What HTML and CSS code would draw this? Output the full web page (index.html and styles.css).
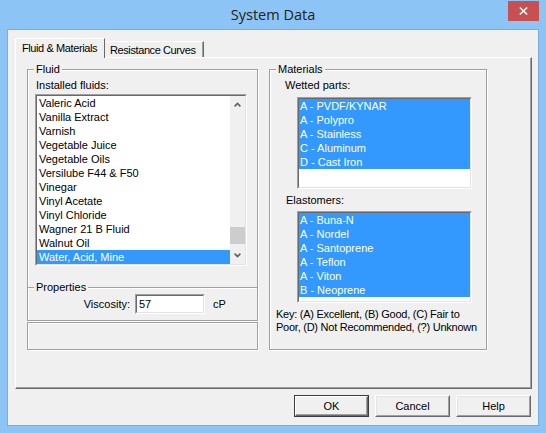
FILE: index.html
```html
<!DOCTYPE html>
<html>
<head>
<meta charset="utf-8">
<title>System Data</title>
<link rel="stylesheet" href="styles.css">
</head>
<body>
<div class="window">
  <div class="titlebar">
    <div></div>
    <div class="title">System Data</div>
    <div class="tb-right">
      <div class="close">
        <svg width="9" height="8" viewBox="0 0 9 8"><path d="M0.8 0.5 L8.2 7.5 M8.2 0.5 L0.8 7.5" fill="none" stroke="#fff" stroke-width="1.5"/></svg>
      </div>
    </div>
  </div>
  <div class="client">
    <div class="tabs">
      <div class="tab tab-active">Fluid &amp; Materials</div>
      <div class="tab tab-plain">Resistance Curves</div>
    </div>
    <div class="panel">
      <div class="col-left">
        <div class="group group-fluid">
          <div class="legend">Fluid</div>
          <div class="field-label">Installed fluids:</div>
          <div class="listbox lb-fluids">
            <div class="lb-inner">
              <div class="items">
                <div class="item">Valeric Acid</div>
                <div class="item">Vanilla Extract</div>
                <div class="item">Varnish</div>
                <div class="item">Vegetable Juice</div>
                <div class="item">Vegetable Oils</div>
                <div class="item">Versilube F44 &amp; F50</div>
                <div class="item">Vinegar</div>
                <div class="item">Vinyl Acetate</div>
                <div class="item">Vinyl Chloride</div>
                <div class="item">Wagner 21 B Fluid</div>
                <div class="item">Walnut Oil</div>
                <div class="item sel">Water, Acid, Mine</div>
              </div>
              <div class="scrollbar">
                <div class="sb-arrow">
                  <svg width="7" height="5" viewBox="0 0 7 5"><path d="M0.6 4.4 L3.5 1.4 L6.4 4.4" fill="none" stroke="#606060" stroke-width="1.6"/></svg>
                </div>
                <div class="sb-track"><div class="sb-thumb"></div></div>
                <div class="sb-arrow">
                  <svg width="7" height="5" viewBox="0 0 7 5"><path d="M0.6 0.6 L3.5 3.6 L6.4 0.6" fill="none" stroke="#606060" stroke-width="1.6"/></svg>
                </div>
              </div>
            </div>
          </div>
        </div>
        <div class="group group-props">
          <div class="legend">Properties</div>
          <div class="visc-row">
            <span class="visc-label">Viscosity:</span>
            <div class="textbox"><div class="tb-inner">57</div></div>
            <span class="unit">cP</span>
          </div>
        </div>
        <div class="group group-empty"></div>
      </div>
      <div class="group group-materials">
        <div class="legend">Materials</div>
        <div class="field-label mat-label">Wetted parts:</div>
        <div class="listbox lb-mat">
          <div class="lb-inner">
            <div class="items">
              <div class="item sel">A - PVDF/KYNAR</div>
              <div class="item sel">A - Polypro</div>
              <div class="item sel">A - Stainless</div>
              <div class="item sel">C - Aluminum</div>
              <div class="item sel">D - Cast Iron</div>
            </div>
          </div>
        </div>
        <div class="field-label elast-label">Elastomers:</div>
        <div class="listbox lb-mat lb-elast">
          <div class="lb-inner">
            <div class="items">
              <div class="item sel">A - Buna-N</div>
              <div class="item sel">A - Nordel</div>
              <div class="item sel">A - Santoprene</div>
              <div class="item sel">A - Teflon</div>
              <div class="item sel">A - Viton</div>
              <div class="item sel">B - Neoprene</div>
            </div>
          </div>
        </div>
        <div class="key">Key: (A) Excellent, (B) Good, (C) Fair to<br>Poor, (D) Not Recommended, (?) Unknown</div>
      </div>
    </div>
    <div class="buttons">
      <div class="btn btn-default"><div class="btn-face">OK</div></div>
      <div class="btn"><div class="btn-face">Cancel</div></div>
      <div class="btn"><div class="btn-face">Help</div></div>
    </div>
  </div>
</div>
</body>
</html>
```

FILE: styles.css
```css
* { box-sizing: border-box; }

html, body {
  margin: 0;
  padding: 0;
}

body {
  font-family: "Liberation Sans", Arial, sans-serif;
  font-size: 11px;
  line-height: 13px;
  color: #000;
  background: #8cc4f5;
}

.window {
  width: 546px;
  height: 433px;
  background: #8cc4f5;
  padding: 0 7px 7px 7px;
  display: flex;
  flex-direction: column;
}

.titlebar {
  height: 29px;
  display: grid;
  grid-template-columns: 1fr auto 1fr;
  align-items: start;
}

.title {
  font-family: "Open Sans", "Noto Sans", sans-serif;
  font-size: 14.5px;
  line-height: 20px;
  padding-top: 5px;
  color: #222;
  white-space: nowrap;
}

.tb-right {
  display: flex;
  justify-content: flex-end;
}

.close {
  width: 31px;
  height: 20px;
  margin-top: 1px;
  background: #c75050;
  display: flex;
  align-items: center;
  justify-content: center;
}

.client {
  flex: 1;
  background: #f0f0f0;
  border: 1px solid #78ace0;
  padding: 8px 7px 8px 7px;
  display: flex;
  flex-direction: column;
}

/* Tabs */
.tabs {
  display: flex;
  align-items: flex-end;
  height: 19px;
}

.tab {
  letter-spacing: -0.4px;
  white-space: nowrap;
  background: #f0f0f0;
}

.tab-active {
  width: 90px;
  height: 20px;
  margin-bottom: -1px;
  position: relative;
  z-index: 1;
  border-top: 1px solid #fff;
  border-left: 1px solid #fff;
  border-right: 1px solid #696969;
  padding: 3px 0 0 6px;
  line-height: 13px;
}

.tab-plain {
  width: 99px;
  height: 16px;
  border-top: 1px solid #fff;
  border-right: 1px solid #696969;
  box-shadow: inset -1px 0 0 #a0a0a0;
  padding: 2px 0 0 5px;
  line-height: 13px;
}

.panel {
  width: 517px;
  height: 332px;
  border-top: 1px solid #fff;
  border-left: 1px solid #fff;
  border-right: 1px solid #696969;
  border-bottom: 1px solid #696969;
  box-shadow: inset -1px -1px 0 #a0a0a0;
  padding: 11px 0 0 11px;
  display: flex;
  align-items: stretch;
  gap: 11px;
  height: 332px;
}

.panel > * { align-self: flex-start; }

/* Group boxes */
.group {
  border: 1px solid #a0a0a0;
  box-shadow: inset 1px 1px 0 #fff, 1px 1px 0 #fff;
}

.legend {
  display: table;
  margin: -7px 0 0 6px;
  padding: 0 2px;
  background: #f0f0f0;
  line-height: 13px;
}

.col-left {
  width: 231px;
  display: flex;
  flex-direction: column;
}

.group-fluid {
  border-bottom: none;
  padding-bottom: 21px;
}

.field-label {
  margin: 3px 0 0 8px;
  line-height: 13px;
}

/* Listboxes */
.listbox {
  border: 1px solid;
  border-color: #a0a0a0 #fff #fff #a0a0a0;
  background: #fff;
}

.lb-inner {
  height: 100%;
  border: 1px solid;
  border-color: #696969 #e3e3e3 #e3e3e3 #696969;
  display: flex;
}

.lb-fluids {
  width: 212px;
  height: 172px;
  margin: 2px 0 0 7px;
}

.items {
  flex: 1;
  min-width: 0;
}

.item {
  height: 14px;
  line-height: 14px;
  padding-left: 2px;
  white-space: nowrap;
}

.item.sel {
  background: #3399ff;
  color: #fff;
}

.scrollbar {
  width: 15px;
  background: #f0f0f0;
  display: flex;
  flex-direction: column;
}

.sb-arrow {
  height: 17px;
  display: flex;
  align-items: center;
  justify-content: center;
}

.sb-track {
  flex: 1;
  display: flex;
  flex-direction: column;
}

.sb-thumb {
  margin-top: auto;
  margin-bottom: 3px;
  height: 17px;
  background: #cdcdcd;
}

/* Properties */
.group-props {
  height: 34px;
}

.visc-row {
  display: flex;
  align-items: center;
  height: 20px;
}

.visc-label {
  width: 102px;
  text-align: right;
}

.textbox {
  width: 70px;
  height: 20px;
  margin-left: 5px;
  border: 1px solid;
  border-color: #a0a0a0 #fff #fff #a0a0a0;
  background: #fff;
}

.tb-inner {
  height: 100%;
  border: 1px solid;
  border-color: #696969 #e3e3e3 #e3e3e3 #696969;
  padding-left: 2px;
  line-height: 16px;
}

.unit {
  margin-left: 8px;
}

.group-empty {
  height: 28px;
  margin-top: 1px;
}

/* Materials */
.group-materials {
  width: 218px;
  height: 281px;
}

.mat-label {
  margin-left: 15px;
}

.lb-mat {
  width: 175px;
  height: 92px;
  margin: 5px 0 0 27px;
}

.lb-mat .item {
  padding-left: 1px;
}

.elast-label {
  margin: 5px 0 0 16px;
}

.lb-elast {
  margin-top: 4px;
}

.key {
  margin: 5px 0 0 6px;
  white-space: nowrap;
  letter-spacing: -0.25px;
  line-height: 13px;
}

/* Buttons */
.buttons {
  display: flex;
  justify-content: flex-end;
  gap: 6px;
  margin-top: 6px;
  padding-right: 0;
}

.btn {
  width: 75px;
  height: 22px;
  border: 1px solid;
  border-color: #fff #696969 #696969 #fff;
}

.btn-face {
  height: 100%;
  border: 1px solid;
  border-color: #e3e3e3 #a0a0a0 #a0a0a0 #e3e3e3;
  display: flex;
  align-items: center;
  justify-content: center;
  line-height: 13px;
}

.btn-default {
  border: 1px solid #3c3c3c;
}

.btn-default .btn-face {
  border-color: #fff #696969 #696969 #fff;
  box-shadow: inset -1px -1px 0 #a0a0a0;
}
```
